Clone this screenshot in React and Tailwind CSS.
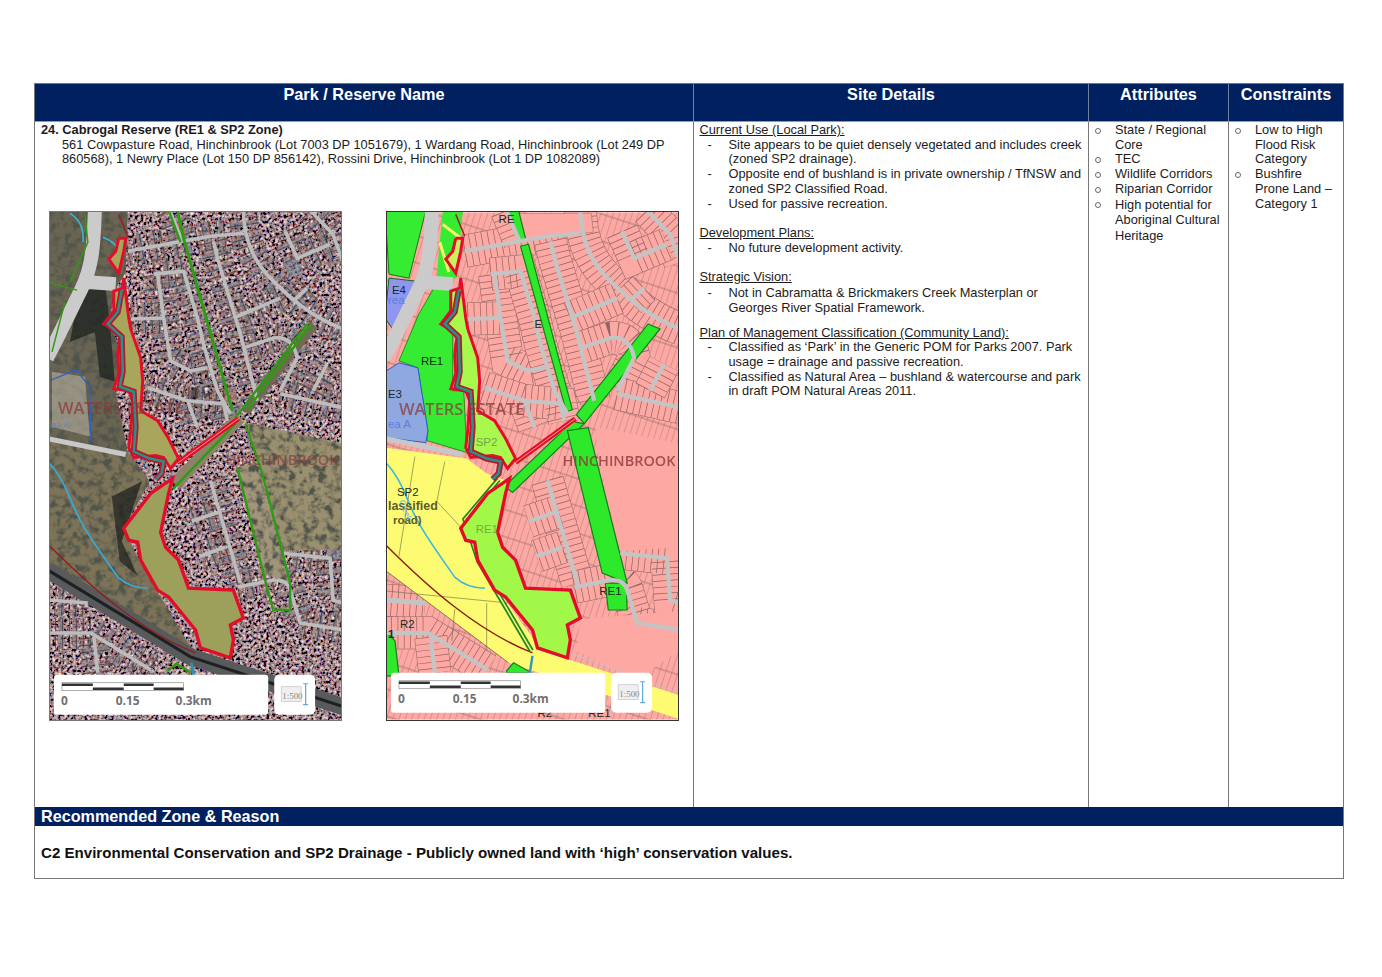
const streets = [
  "M78,39 L121,31 L161,24 L194,21",
  "M120,-2 L133,29",
  "M194,-2 C195,30 205,50 224,69 C240,85 262,105 294,117",
  "M164,29 L168,46 L191,122 L208,189",
  "M261,-2 L284,22 L294,50",
  "M236,19 L248,46 L281,32",
  "M108,62 L114,106 L121,149 L141,159 L158,156",
  "M104,62 L134,59 L148,106 L154,132 L168,179 L181,202",
  "M81,107 L114,106",
  "M98,176 L138,189 L148,216",
  "M138,189 L174,192 L178,209",
  "M184,106 L231,86 M258,76 L244,89",
  "M194,136 L224,126 Q244,124 248,146 L231,179",
  "M231,182 L294,196",
  "M264,179 L278,152",
  "M161,269 L191,372",
  "M188,376 L224,369 Q238,368 241,379 L251,412 L294,419",
  "M234,342 L281,347 L284,389 L294,392",
  "M-2,389 L38,392",
  "M-2,422 L41,422 L101,459",
  "M44,426 L48,462",
  "M172,300 L142,310 M176,336 L150,345",
];
const mainRoad = "M45,-2 C44,30 43,55 31,78 C21,98 10,122 -3,146 M38,70 L66,72";
const northRoad = "M-2,227 L76,243";
const reserveNorth = "69,26 76,26 74,39 69,61 59,47 66,39";
const reserveMiddle =
  "74,66 79,106 81,117 91,146 93,169 91,199 108,209 119,227 129,247 121,257 114,246 106,244 84,246 79,236 81,219 83,189 79,179 64,177 69,162 68,142 69,132 71,122 54,112 64,99 64,79 73,76";
const reserveSouth =
  "123,267 119,282 111,321 116,336 129,349 139,377 184,379 194,407 181,414 184,429 181,447 151,437 146,419 119,386 108,379 91,349 88,331 79,329 74,317 101,282";
const creekInner =
  "M72,78 L68,100 L58,112 L72,125 L73,160 L70,175 L84,180 L86,215 L84,240 L100,247 L114,250 L112,262 L106,268";
const creekBlue = "M-2,250 Q12,265 21,289 C30,312 44,332 68,366 Q80,377 98,377";
const redArc = "M-2,333 C40,375 90,420 146,442";

function Reserve() {
  return (
    <g>
      <polyline points={reserveNorth + " 69,26"} fill="none" stroke="#e3102c" strokeWidth="3" />
      <polygon points={reserveMiddle} fill="none" stroke="#e3102c" strokeWidth="3" />
      <path d={creekInner} fill="none" stroke="#b31a2a" strokeWidth="6" />
      <path d={creekInner} fill="none" stroke="#2b8f8c" strokeWidth="2.5" />
      <path d="M129,251 L189,207" stroke="#e3102c" strokeWidth="5" />
      <path d="M129,251 L189,207" stroke="#f3c0a0" strokeWidth="0.8" />
      <polygon points={reserveSouth} fill="none" stroke="#e3102c" strokeWidth="3.4" />
      <path d="M69,2 L78,24" stroke="#a81824" strokeWidth="1.5" />
    </g>
  );
}

function ScaleBar({ y }) {
  return (
    <g fontFamily="'Open Sans', sans-serif" fontWeight="700" fontSize="12" fill="#707070">
      <rect x="4" y={y} width="215" height="40" rx="3" fill="#fff" />
      <rect x="225" y={y} width="41" height="40" rx="5" fill="#fff" />
      <rect x="12" y={y + 8} width="122" height="8" fill="#fff" stroke="#777" strokeWidth="0.6" />
      <path d={`M12,${y + 10} h31 M74,${y + 10} h30`} stroke="#333" strokeWidth="2.6" />
      <path d={`M43,${y + 14} h31 M104,${y + 14} h30`} stroke="#333" strokeWidth="2.6" />
      <text x="11" y={y + 30}>0</text>
      <text x="66" y={y + 30}>0.15</text>
      <text x="126" y={y + 30}>0.3km</text>
      <rect x="232" y={y + 12} width="20" height="15" fill="#efefef" stroke="#bbb" strokeWidth="0.6" />
      <text x="233" y={y + 24} fontSize="9" fontWeight="400" fill="#8a8a8a" fontFamily="'Liberation Serif', serif">1:500</text>
      <path d={`M254,${y + 9} h5 M256.5,${y + 9} v21 M254,${y + 30} h5`} stroke="#62a9dc" strokeWidth="1.2" fill="none" />
    </g>
  );
}

function AerialMap() {
  return (
    <svg viewBox="0 0 292 509" className="block h-full w-full">
      <defs>
        <filter id="roofs" x="0" y="0" width="100%" height="100%">
          <feTurbulence type="fractalNoise" baseFrequency="0.34" numOctaves="2" seed="9" />
          <feColorMatrix values="1.6 0.7 0 0 -0.82  1.1 1 0 0 -0.82  0.8 1 0.3 0 -0.8  0 0 0 0 1" />
        </filter>
        <filter id="speckle" x="0" y="0" width="100%" height="100%">
          <feTurbulence type="fractalNoise" baseFrequency="0.13" numOctaves="3" seed="4" />
          <feColorMatrix values="0 0 0 0 0.08  0 0 0 0 0.09  0 0 0 0 0.07  2.6 2.6 0 0 -2.35" />
          <feComposite in2="SourceGraphic" operator="in" />
          <feMerge>
            <feMergeNode in="SourceGraphic" />
            <feMergeNode />
          </feMerge>
        </filter>
        <filter id="soft">
          <feGaussianBlur stdDeviation="0.6" />
        </filter>
      </defs>
      <g filter="url(#soft)">
        <rect width="292" height="509" filter="url(#roofs)" />
        {streets.map((d) => (
          <g key={d} fill="none" strokeWidth="30">
            <path d={d} stroke="#a37a72" strokeDasharray="3 7 3 11" opacity="0.6" />
            <path d={d} stroke="#77808f" strokeDasharray="3 15 4 11" strokeDashoffset="6" opacity="0.6" />
            <path d={d} stroke="#26262a" strokeDasharray="1 6" opacity="0.6" />
          </g>
        ))}
        <g filter="url(#speckle)">
          <polygon points="-2,-2 78,-2 76,60 64,80 60,110 70,140 66,180 78,240 -2,230" fill="#6a6552" />
          <polygon points="-2,230 78,240 100,270 74,317 90,350 146,445 -2,365" fill="#7d7358" />
          <polygon points="198,212 294,232 294,339 234,339 211,259" fill="#9a9070" />
          <polygon points="188,256 208,249 241,372 214,362" fill="#a2967a" />
        </g>
        <polygon points="30,75 55,70 60,110 65,170 50,165 45,120 20,130" fill="#1c2120" opacity="0.75" />
        <polygon points="62,285 92,270 72,330 88,365 70,350" fill="#1b1e1c" opacity="0.7" />
        <polygon points="2,160 35,165 40,225 2,215" fill="#b6b0a0" opacity="0.6" />
        <path d="M-2,359 L141,446 L294,496" stroke="#585a5c" strokeWidth="17" fill="none" />
        <path d="M-2,359 L141,446 L294,496" stroke="#1e2020" strokeWidth="3" fill="none" />
        <path d="M190,206 L126,272" stroke="#8c8268" strokeWidth="13" />
        <path d="M196,200 L265,113" stroke="#6f6a55" strokeWidth="9" />
        <path d={northRoad} stroke="#c8c8c8" strokeWidth="5" />
        {streets.map((d) => (
          <path key={d} d={d} fill="none" stroke="#bdbdbd" strokeWidth="3.6" />
        ))}
        <path d={mainRoad} fill="none" stroke="#cbcbcb" strokeWidth="14" />
        <g fill="none" stroke="#2f9a12" strokeWidth="2.4">
          <path d="M128,-2 L134,26 L183,199" strokeWidth="3" />
          <path d="M119,-2 L131,30" />
          <path d="M198,198 L262,112 M186,206 L258,112" />
          <path d="M186,212 L124,277 M196,212 L212,259 L219,285 L241,372" />
          <path d="M188,256 L214,362 L224,399 L241,399 L241,372" />
          <path d="M-2,70 L27,78 M2,140 L15,90 M35,1 L38,30 L20,70" strokeWidth="1.5" />
          <path d="M118,460 L127,453 L141,462" />
        </g>
        <path d={creekBlue} fill="none" stroke="#38a8d8" strokeWidth="1.8" />
        <path d="M20,1 Q35,10 33,30 M53,25 Q68,30 72,45" fill="none" stroke="#38b4d8" strokeWidth="1.6" />
        <path d="M2,168 L26,158 L40,175 L41,230" fill="none" stroke="#2b62c8" strokeWidth="1.2" />
        <path d={redArc} fill="none" stroke="#961c1c" strokeWidth="1.4" />
        <polygon points={reserveMiddle} fill="#a8a65a" />
        <polygon points={reserveSouth} fill="#9da05a" />
        <polygon points={reserveNorth} fill="#a8a65a" />
        <path d="M142,452 L145,470" stroke="#2e8fb8" strokeWidth="3" />
        <Reserve />
      </g>
      <text x="8" y="202" fontSize="16.5" fontWeight="600" fill="#8a3a3a" opacity="0.75" fontFamily="'Open Sans', sans-serif">WATERS ESTATE</text>
      <text x="176" y="254" fontSize="14.5" fontWeight="600" fill="#8a3a3a" opacity="0.7" fontFamily="'Open Sans', sans-serif">HINCHINBROOK</text>
      <text x="1" y="216" fontSize="9" fill="#5a7fe0" fontFamily="'Liberation Sans', sans-serif">ea A</text>
      <ScaleBar y={464} />
    </svg>
  );
}

function ZoningMap() {
  const zoneLabel = "'Liberation Sans', sans-serif";
  return (
    <svg viewBox="0 0 292 509" className="block h-full w-full">
      <defs>
        <filter id="soft2">
          <feGaussianBlur stdDeviation="0.3" />
        </filter>
        <pattern id="lots" width="6" height="26" patternUnits="userSpaceOnUse" patternTransform="rotate(18)">
          <rect width="6" height="26" fill="#fda8a3" />
          <path d="M0,0 V26 M0,13 H6" stroke="#8f6563" strokeWidth="0.7" />
        </pattern>
      </defs>
      <g filter="url(#soft2)">
        <rect width="292" height="509" fill="url(#lots)" />
        {streets.map((d) => (
          <g key={d} fill="none">
            <path d={d} stroke="#8f6563" strokeWidth="33" />
            <path d={d} stroke="#fda8a3" strokeWidth="32" />
            <path d={d} stroke="#8f6563" strokeWidth="32" strokeDasharray="0.7 5.6" />
          </g>
        ))}
        <polygon points="132,1 205,1 207,20 160,24 134,30" fill="#fda8a3" stroke="#8f6563" strokeWidth="0.5" />
        <polygon points="209,215 294,232 294,336 234,340 214,259" fill="#fda8a3" />
        <polygon points="194,408 292,400 292,440 250,470 190,440" fill="#fda8a3" />

        <polygon points="-2,-2 39,-2 22,66 2,62" fill="#36ec30" stroke="#137a13" strokeWidth="1" />
        <polygon points="56,-2 76,-2 70,66 50,66 52,40" fill="#36ec30" />
        <polygon points="47,76 66,77 62,106 54,111 66,122 66,179 77,179 79,219 80,241 40,229 41,219 31,156 12,149 32,102" fill="#36ec30" stroke="#137a13" strokeWidth="0.8" />
        <polygon points="2,66 29,69 9,122 -2,106" fill="#8f96f0" stroke="#15651c" strokeWidth="1" />
        <polygon points="-2,160 12,151 31,156 41,219 39,231 -2,226" fill="#90a8e0" stroke="#2262d0" strokeWidth="1" />
        <path d="M56,12 L74,26 M53,30 L62,60" stroke="#f8f46a" strokeWidth="3" fill="none" />
        <polygon points="-2,236 80,247 100,262 122,270 78,310 90,350 145,425 152,439 292,484 292,508 122,452 -2,359" fill="#fdfb72" />
        <g stroke="#6c6c40" strokeWidth="0.6" fill="none">
          <path d="M28,245 L12,345 M58,250 L50,290 L74,316 M0,380 L122,392 M68,398 L65,430 M100,392 L100,440" />
        </g>
        <path d="M-2,359 L122,452" stroke="#70604a" strokeWidth="0.8" />
        <g fill="#2fe82c" stroke="#12801a" strokeWidth="1.2">
          <polygon points="122,-2 132,-2 139,26 134,30" />
          <polygon points="134,34 142,32 186,198 180,200" />
          <polygon points="190,203 262,112 274,117 198,212" />
          <polygon points="186,210 198,212 126,281 118,275" />
          <polygon points="181,219 202,216 241,372 216,362" />
          <polygon points="219,372 240,372 241,399 222,399" />
          <polygon points="120,460 127,452 145,462 120,462" />
          <polygon points="-2,420 8,430 12,465 -2,465" />
        </g>
        <path d="M130,252 L188,210" stroke="#f8f080" strokeWidth="2" />
        {streets.map((d) => (
          <path key={d} d={d} fill="none" stroke="#c4c4c4" strokeWidth="4.2" />
        ))}
        <path d={northRoad} stroke="#c8c8c8" strokeWidth="5" />
        <path d="M-2,389 L38,392" stroke="#c4c4c4" strokeWidth="5" />
        <path d={mainRoad} fill="none" stroke="#cbcbcb" strokeWidth="14" />
        <path d="M172,438 L292,482" stroke="#c4c4c4" strokeWidth="0.8" />
        <path d={creekBlue} fill="none" stroke="#38b8e0" strokeWidth="1.6" />
        <path d={redArc} fill="none" stroke="#8c1c12" strokeWidth="1.4" />
        <path d="M112,268 L78,308 L92,350 L145,440" fill="none" stroke="#1f8a1f" strokeWidth="5" />
        <path d="M112,268 L78,308 L92,350 L145,440" fill="none" stroke="#f8f480" strokeWidth="1.6" />
        <polygon points={reserveMiddle} fill="#a9f84e" />
        <polygon points={reserveSouth} fill="#a2f84a" />
        <polygon points={reserveNorth} fill="#c8f060" />
        <path d="M146,445 L142,470" stroke="#2e98c0" strokeWidth="2.4" />
        <Reserve />
      </g>
      <g fontFamily={zoneLabel} fontSize="11.5" fill="#1d2a1d">
        <text x="5" y="82">E4</text>
        <text x="1" y="92" fill="#5a7fe0">rea</text>
        <text x="34" y="153">RE1</text>
        <text x="1" y="186">E3</text>
        <text x="1" y="216" fill="#5a7fe0">ea A</text>
        <text x="89" y="234" fill="#6fa848">SP2</text>
        <text x="112" y="11">RE</text>
        <text x="148" y="116">E</text>
        <text x="10" y="285">SP2</text>
        <text x="1" y="299" fontSize="12.5" fontWeight="700" fill="#5c5c30">lassified</text>
        <text x="6" y="313" fontWeight="700" fill="#5c5c30">road)</text>
        <text x="89" y="322" fill="#6fb040">RE1</text>
        <text x="213" y="384">RE1</text>
        <text x="13" y="417">R2</text>
        <text x="151" y="506">R2</text>
        <text x="202" y="506">RE1</text>
        <text x="1" y="427" fontWeight="700">1</text>
      </g>
      <text x="12" y="203" fontSize="16.5" fontWeight="600" fill="#8a3a3a" opacity="0.75" fontFamily="'Open Sans', sans-serif">WATERS ESTATE</text>
      <text x="176" y="255" fontSize="14.5" fontWeight="600" fill="#8a3a3a" opacity="0.8" fontFamily="'Open Sans', sans-serif">HINCHINBROOK</text>
      <text x="12" y="290" fontSize="8" fill="#56b4dc" fontFamily={zoneLabel} transform="rotate(68 12 290)">Creek</text>
      <ScaleBar y={462} />
    </svg>
  );
}

const siteDetails = [
  {
    title: "Current Use (Local Park):",
    items: [
      "Site appears to be quiet densely vegetated and includes creek (zoned SP2 drainage).",
      "Opposite end of bushland is in private ownership / TfNSW and zoned SP2 Classified Road.",
      "Used for passive recreation.",
    ],
  },
  { title: "Development Plans:", items: ["No future development activity."] },
  {
    title: "Strategic Vision:",
    items: ["Not in Cabramatta & Brickmakers Creek Masterplan or Georges River Spatial Framework."],
    tall: true,
  },
  {
    title: "Plan of Management Classification (Community Land):",
    items: [
      "Classified as ‘Park’ in the Generic POM for Parks 2007. Park usage = drainage and passive recreation.",
      "Classified as Natural Area – bushland & watercourse and park in draft POM Natural Areas 2011.",
    ],
  },
];

const attributes = ["State / Regional Core", "TEC", "Wildlife Corridors", "Riparian Corridor", "High potential for Aboriginal Cultural Heritage"];
const constraints = ["Low to High Flood Risk Category", "Bushfire Prone Land – Category 1"];

function CircleList({ items, looseLast }) {
  return (
    <ul>
      {items.map((item, i) => (
        <li key={item} className={`flex ${looseLast && i === items.length - 1 ? "leading-[15.5px]" : ""}`}>
          <span className="mt-[5px] mr-[14px] h-[6px] w-[6px] shrink-0 rounded-full border border-[#666]" />
          <span className="min-w-0">{item}</span>
        </li>
      ))}
    </ul>
  );
}

function HeaderCell({ children, last }) {
  return (
    <div className={`h-[37px] pt-[1px] text-center text-[16.3px] leading-[19px] font-bold text-white ${last ? "" : "border-r border-[#6f7f9f]"}`}>
      {children}
    </div>
  );
}

export default function App() {
  return (
    <div className="min-h-[977px] bg-white pt-[83px] pl-[34px] font-['Liberation_Sans',Arial,sans-serif] text-[12.8px] leading-[14.7px] text-[#1c1c1c]">
      <div className="w-[1310px] border border-[#777]">
        <div className="grid grid-cols-[659px_395px_140px_114px] bg-[#002060]">
          <HeaderCell>Park / Reserve Name</HeaderCell>
          <HeaderCell>Site Details</HeaderCell>
          <HeaderCell>Attributes</HeaderCell>
          <HeaderCell last>Constraints</HeaderCell>
        </div>

        <div className="grid h-[686px] grid-cols-[659px_395px_140px_114px] border-t border-[#999]">
          <div className="border-r border-[#777] pt-[1px] pl-[6px]">
            <div className="font-bold">24. Cabrogal Reserve (RE1 & SP2 Zone)</div>
            <div className="w-[625px] pl-[21px]">
              561 Cowpasture Road, Hinchinbrook (Lot 7003 DP 1051679), 1 Wardang Road, Hinchinbrook (Lot 249 DP 860568), 1 Newry Place (Lot 150 DP 856142), Rossini Drive, Hinchinbrook (Lot 1 DP 1082089)
            </div>
            <div className="mt-[44px] ml-[8px] flex gap-[44px]">
              <div className="h-[510px] w-[293px] border border-[#777]">
                <AerialMap />
              </div>
              <div className="h-[510px] w-[293px] border border-[#333]">
                <ZoningMap />
              </div>
            </div>
          </div>

          <div className="border-r border-[#777] pt-[1px] pl-[5.5px]">
            {siteDetails.map((section, i) => (
              <div key={section.title} className={i === 0 ? "" : i === 3 ? "mt-[9.5px]" : "mt-[14.7px]"}>
                <div className="underline">{section.title}</div>
                <ul>
                  {section.items.map((item) => (
                    <li key={item} className={`flex pr-[6px] ${section.tall ? "leading-[15.7px]" : ""}`}>
                      <span className="w-[29px] shrink-0 pl-[8px]">-</span>
                      <span className="min-w-0">{item}</span>
                    </li>
                  ))}
                </ul>
              </div>
            ))}
          </div>

          <div className="border-r border-[#777] pt-[1px] pl-[6px]">
            <CircleList items={attributes} looseLast />
          </div>

          <div className="pt-[1px] pr-[8px] pl-[6px]">
            <CircleList items={constraints} />
          </div>
        </div>

        <div className="h-[19px] bg-[#002060] pl-[6px] text-[16.2px] leading-[19px] font-bold text-white">
          Recommended Zone & Reason
        </div>
        <div className="h-[52px] pt-[18px] pl-[6px] text-[15.1px] leading-[17px] font-bold text-[#111]">
          C2 Environmental Conservation and SP2 Drainage - Publicly owned land with ‘high’ conservation values.
        </div>
      </div>
    </div>
  );
}
